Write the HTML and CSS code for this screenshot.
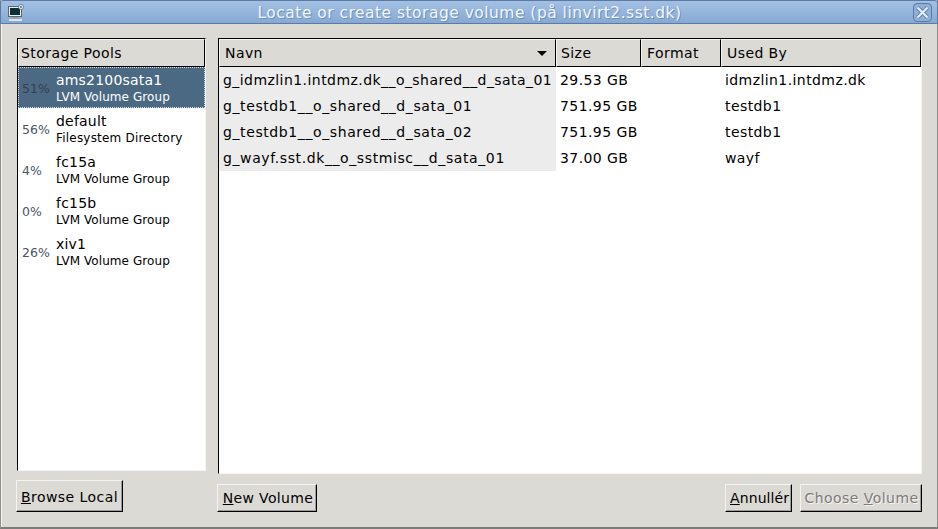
FILE: index.html
```html
<!DOCTYPE html>
<html lang="da">
<head>
<meta charset="utf-8">
<title>Locate or create storage volume</title>
<link rel="stylesheet" href="styles.css">
</head>
<body>
<div class="window">
  <header class="titlebar">
    <svg class="app-icon" width="18" height="18" viewBox="0 0 18 18">
      <rect x="2.500" y="3.500" width="13" height="10" fill="#e8eef0" stroke="#5a6670"/>
      <rect x="4" y="5" width="10" height="7" fill="#0e2f34"/>
      <rect x="6" y="14" width="6" height="2" fill="#9aa0a0"/>
      <rect x="3" y="16" width="13" height="2" fill="#e2e4e0"/>
      <circle cx="15" cy="4" r="2.500" fill="#eef2f6" stroke="#4a5a6a" stroke-width=".7"/>
      <circle cx="15" cy="4" r="1" fill="#3f6f8a"/>
    </svg>
    <div class="title">Locate or create storage volume (på linvirt2.sst.dk)</div>
    <div class="close">
      <svg width="15" height="15" viewBox="0 0 15 15"><path d="M2.500 2.500 L12.500 12.500 M12.500 2.500 L2.500 12.500" stroke="#5f80ab" stroke-width="4" fill="none"/><path d="M2.500 2.500 L12.500 12.500 M12.500 2.500 L2.500 12.500" stroke="#e6edf6" stroke-width="2.200" fill="none"/></svg>
    </div>
  </header>
  <main class="content">
    <section class="left">
      <div class="panel pools">
        <div class="head head-pools">Storage Pools</div>
        <ul class="pool-list">
          <li class="pool selected"><span class="pct">51%</span><span class="info"><b>ams2100sata1</b><small>LVM Volume Group</small></span></li>
          <li class="pool"><span class="pct">56%</span><span class="info"><b>default</b><small class="wide">Filesystem Directory</small></span></li>
          <li class="pool"><span class="pct">4%</span><span class="info"><b>fc15a</b><small>LVM Volume Group</small></span></li>
          <li class="pool"><span class="pct">0%</span><span class="info"><b>fc15b</b><small>LVM Volume Group</small></span></li>
          <li class="pool"><span class="pct">26%</span><span class="info"><b>xiv1</b><small>LVM Volume Group</small></span></li>
        </ul>
      </div>
      <div class="left-actions"><button class="btn browse"><u>B</u>rowse Local</button></div>
    </section>
    <section class="right">
      <div class="panel volumes">
        <div class="cols header-row">
          <div class="head navn">Navn<i class="arrow"></i></div>
          <div class="head size-head">Size</div>
          <div class="head">Format</div>
          <div class="head used">Used By</div>
        </div>
        <div class="cols row"><div class="name">g_idmzlin1.intdmz.dk__o_shared__d_sata_01</div><div class="size">29.53 GB</div><div></div><div class="user">idmzlin1.intdmz.dk</div></div>
        <div class="cols row"><div class="name name-wide">g_testdb1__o_shared__d_sata_01</div><div class="size">751.95 GB</div><div></div><div class="user">testdb1</div></div>
        <div class="cols row"><div class="name name-wide">g_testdb1__o_shared__d_sata_02</div><div class="size">751.95 GB</div><div></div><div class="user">testdb1</div></div>
        <div class="cols row"><div class="name name-wide">g_wayf.sst.dk__o_sstmisc__d_sata_01</div><div class="size">37.00 GB</div><div></div><div class="user">wayf</div></div>
      </div>
      <div class="right-actions">
        <button class="btn new"><u>N</u>ew Volume</button>
        <span class="spacer"></span>
        <button class="btn cancel"><u>A</u>nnullér</button>
        <button class="btn choose" disabled>Choose <u>V</u>olume</button>
      </div>
    </section>
  </main>
</div>
</body>
</html>
```
FILE: styles.css
```css
* { box-sizing: border-box; }
html, body { margin: 0; padding: 0; }
body {
  width: 938px;
  height: 529px;
  overflow: hidden;
  font-family: "DejaVu Sans", sans-serif;
  font-size: 14px;
  letter-spacing: .42px;
  color: #000;
  background: #dcdad5;
}
.window {
  width: 938px;
  height: 529px;
  display: flex;
  flex-direction: column;
  border: 1px solid #8d8f8c;
  border-top: 0;
  border-bottom: 2px solid #7b7d7b;
  box-shadow: inset 1px 0 0 #f4f3f1;
}
.titlebar {
  height: 24px;
  margin: 0 -1px;
  flex: none;
  display: flex;
  align-items: center;
  padding: 0 5px 0 5px;
  background: linear-gradient(#a3c0e3 0%, #86a9d4 100%);
  border: 1px solid #5c7ba3;
  border-radius: 3px 3px 0 0;
}
.app-icon { flex: none; }
.title {
  flex: 1;
  text-align: center;
  color: #f2f6fb;
  font-size: 15.500px;
  letter-spacing: .48px;
  padding: 1px 0 0 2px;
  text-shadow: 1px 1px 0 #6e8fb8;
}
.close {
  width: 19px;
  height: 19px;
  display: flex;
  align-items: center;
  justify-content: center;
  border: 1px solid #5c7ba3;
  border-radius: 4px;
  background: #90afd8;
}
.content {
  flex: 1;
  display: flex;
  padding: 14px 16px 15px 15px;
  gap: 11px;
  min-height: 0;
}
.left { width: 191px; flex: none; display: flex; flex-direction: column; }
.right { flex: 1; display: flex; flex-direction: column; min-width: 0; }
.panel {
  background: #fff;
  border: 1px solid #000;
  border-right-color: #f4f3f1;
  border-bottom-color: #f4f3f1;
}
.pools { height: 433px; flex: none; margin: 0 1px 0 1px; }
.volumes { height: 436px; flex: none; margin-right: -1px; }
.head {
  height: 28px;
  display: flex;
  align-items: center;
  background: #dcdad5;
  border: 1px solid #000;
  border-top: 1px solid #f4f3f1;
  border-left: 1px solid #f4f3f1;
  padding-left: 5px;
}
.head-pools { padding-left: 2px; }
.size-head { padding-left: 4px; }
.pool-list { list-style: none; margin: 0; padding: 0; }
.pool {
  height: 41px;
  display: flex;
  align-items: center;
  padding: 1px 0 0 4px;
}
.pool .pct { width: 34px; flex: none; color: #4a5566; font-size: 12.500px; letter-spacing: .1px; padding-top: 1px; }
.info { display: flex; flex-direction: column; }
.info b { font-weight: 400; line-height: 17px; letter-spacing: .2px; }
.info small { font-size: 12px; line-height: 16px; letter-spacing: .07px; }
.info .wide { letter-spacing: .2px; }
.selected {
  background: #4b6983;
  color: #fff;
  outline: 1px dotted #d8dee4;
  outline-offset: -1px;
}
.selected .pct { color: #33414d; }
.left-actions { display: flex; flex: 1; }
.cols { display: grid; grid-template-columns: 337px 85px 80px 1fr; }
.header-row { height: 28px; }
.navn { position: relative; }
.arrow {
  position: absolute;
  right: 8px;
  top: 11px;
  width: 0;
  height: 0;
  border-left: 5px solid transparent;
  border-right: 5px solid transparent;
  border-top: 5px solid #000;
}
.row { height: 26px; line-height: 27px; }
.row > div { height: 26px; }
.name { background: #ececec; padding-left: 4px; white-space: nowrap; letter-spacing: .44px; }
.name-wide { letter-spacing: .6px; }
.size { padding-left: 4px; }
.user { padding-left: 4px; }
.left-actions, .right-actions { align-items: flex-end; }
.right-actions { display: flex; flex: 1; gap: 8px; margin: 0 -1px 0 -1px; }
.spacer { flex: 1; }
.btn {
  font: inherit;
  letter-spacing: .45px;
  background: #dcdad5;
  color: #000;
  border: 1px solid #000;
  border-top-color: #f4f3f1;
  border-left-color: #f4f3f1;
  padding: 0 2px;
  box-shadow: inset -1px -1px 0 #9d9c9b;
  white-space: nowrap;
}
.browse { width: 107px; height: 32px; padding-top: 1px; }
.new { width: 100px; height: 28px; padding-left: 4px; letter-spacing: .35px; }
.cancel { width: 67px; height: 28px; padding-left: 4px; letter-spacing: .1px; }
.choose { width: 122px; height: 28px; padding-left: 3px; color: #7d7c7a; text-shadow: 1px 1px 0 #f4f3f1; }
```
